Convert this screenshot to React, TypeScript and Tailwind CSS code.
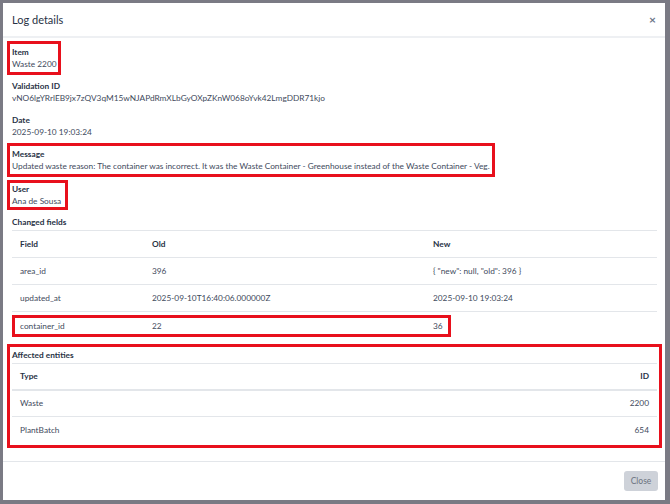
const changedFields = [
  { field: 'area_id', old: '396', next: '{ "new": null, "old": 396 }' },
  { field: 'updated_at', old: '2025-09-10T16:40:06.000000Z', next: '2025-09-10 19:03:24' },
];

function Field({ label, value, boxed }: { label: string; value: string; boxed?: string }) {
  const content = (
    <>
      <div className="font-bold text-[#283245] leading-[12px]">{label}</div>
      <div className="text-[#414a5c] leading-[12px]">{value}</div>
    </>
  );
  if (boxed) {
    return (
      <div className={`-mx-[5px] pl-[2px] border-[3px] border-[#e8101c] w-fit whitespace-nowrap ${boxed}`}>
        {content}
      </div>
    );
  }
  return <div className="py-[5px] whitespace-nowrap">{content}</div>;
}

export default function App() {
  return (
    <div
      className="w-[670px] h-[504px] overflow-hidden bg-[#7a7a84] pt-[3px] pl-[3px]"
      style={{ fontFamily: 'Lato, "Noto Sans", sans-serif' }}
    >
      <div className="w-[662px] h-[497px] bg-white flex flex-col text-[8.3px]">
        {/* Header */}
        <div className="flex items-center justify-between h-[35px] pl-[9px] pr-[9px] border-b-2 border-[#eef0f3]">
          <h1 className="text-[11px] text-[#283245] mt-[1px]">Log details</h1>
          <span className="text-[12px] font-bold text-[#6b7587] leading-none">×</span>
        </div>

        {/* Body */}
        <div className="px-[9px] pt-[3px] flex flex-col">
          <Field label="Item" value="Waste 2200" boxed="pr-[1px] py-[2px]" />
          <Field label="Validation ID" value="vNO6lgYRrlEB9jx7zQV3qM15wNJAPdRmXLbGyOXpZKnW068oYvk42LmgDDR71kjo" />
          <Field label="Date" value="2025-09-10 19:03:24" />
          <Field
            label="Message"
            value="Updated waste reason: The container was incorrect. It was the Waste Container - Greenhouse instead of the Waste Container - Veg."
            boxed="pr-[2px] py-[2px]"
          />
          <Field label="User" value="Ana de Sousa" boxed="pr-[4px] mt-[3px] py-0" />

          <div className="font-bold text-[#283245] leading-[12px] mt-[6px] mb-[2px]">Changed fields</div>
          <table className="w-[645px] border-t border-[#e3e6ea] text-left">
            <thead>
              <tr className="h-[27px] border-b border-[#e3e6ea] text-[#283245]">
                <th className="w-[140px] pl-[8px] font-bold">Field</th>
                <th className="w-[281px] font-bold">Old</th>
                <th className="font-bold">New</th>
              </tr>
            </thead>
            <tbody className="text-[#414a5c]">
              {changedFields.map((r) => (
                <tr key={r.field} className="h-[27px] border-b border-[#e3e6ea]">
                  <td className="pl-[8px]">{r.field}</td>
                  <td>{r.old}</td>
                  <td>{r.next}</td>
                </tr>
              ))}
            </tbody>
          </table>
          <div className="mt-[3px] w-[439px] h-[22px] border-[3px] border-[#e8101c] flex items-center text-[#414a5c]">
            <span className="w-[137px] pl-[5px]">container_id</span>
            <span className="w-[281px]">22</span>
            <span>36</span>
          </div>

          <div className="-mx-[5px] mt-[7px] w-[655px] h-[104px] border-[3px] border-[#e8101c] pl-[2px]">
            <div className="font-bold text-[#283245] leading-[16px]">Affected entities</div>
            <table className="w-[645px] border-t border-[#e3e6ea] text-left">
              <thead>
                <tr className="h-[26px] border-b-2 border-[#e3e6ea] text-[#283245]">
                  <th className="pl-[8px] font-bold">Type</th>
                  <th className="pr-[8px] text-right font-bold">ID</th>
                </tr>
              </thead>
              <tbody className="text-[#414a5c]">
                <tr className="h-[27px] border-b border-[#e3e6ea]">
                  <td className="pl-[8px]">Waste</td>
                  <td className="pr-[8px] text-right">2200</td>
                </tr>
                <tr className="h-[27px]">
                  <td className="pl-[8px]">PlantBatch</td>
                  <td className="pr-[8px] text-right">654</td>
                </tr>
              </tbody>
            </table>
          </div>
        </div>

        {/* Footer */}
        <div className="mt-auto h-[39px] border-t border-[#e3e6ea] flex items-center justify-end pr-[7px]">
          <button className="h-[20px] w-[34px] rounded-[3px] bg-[#ced2d9] text-[#6b7280] text-[8.5px]">Close</button>
        </div>
      </div>
    </div>
  );
}
